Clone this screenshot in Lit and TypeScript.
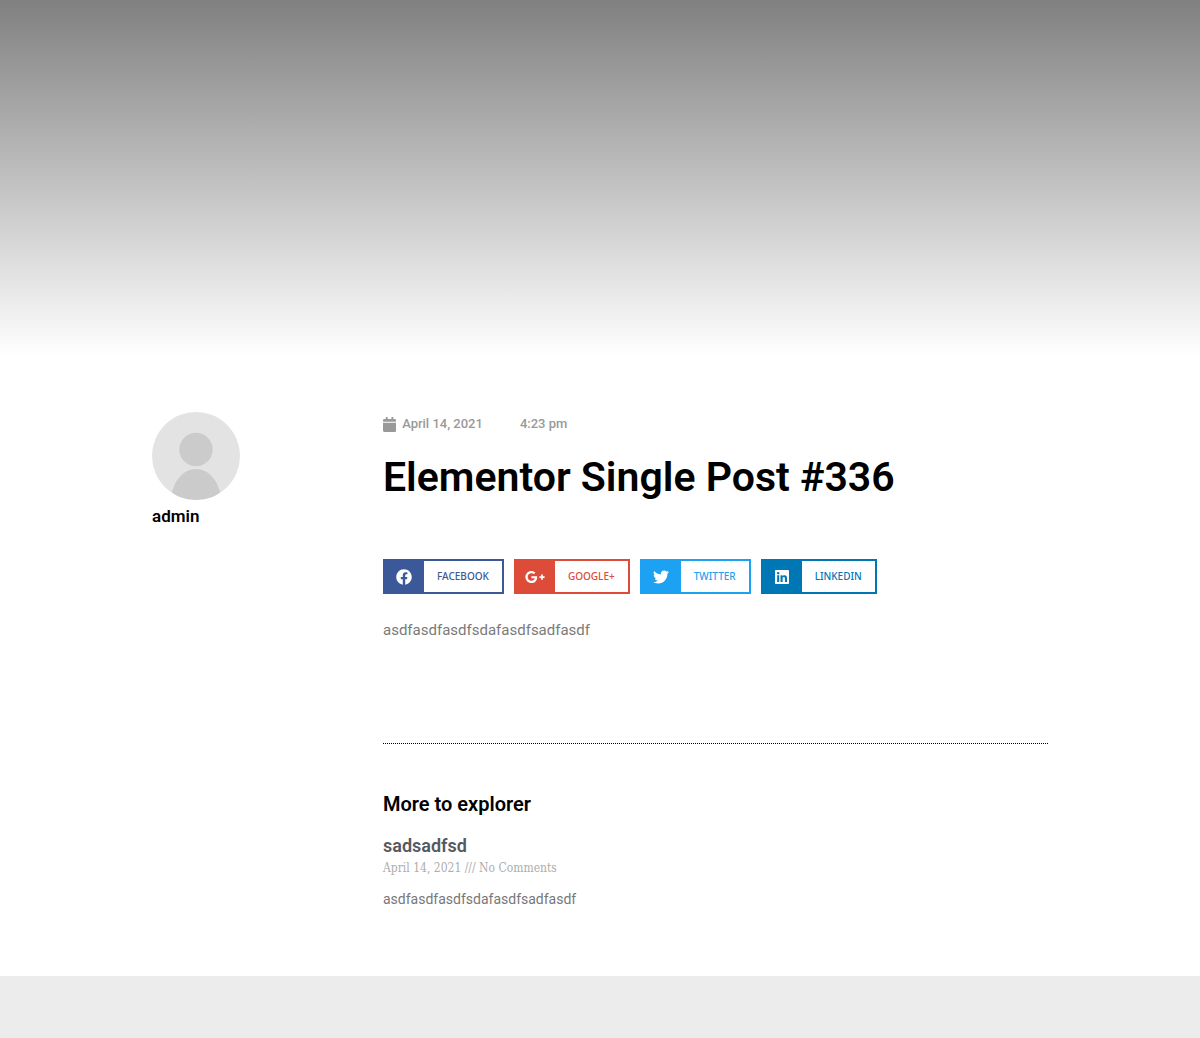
import { LitElement, html, css, svg } from "lit";
import { customElement, property } from "lit/decorators.js";

interface Network {
  name: string;
  kind: string;
  box: string;
  path: string;
}

const NETWORKS: Network[] = [
  {
    name: "Facebook",
    kind: "facebook",
    box: "0 0 512 512",
    path: "M504 256C504 119 393 8 256 8S8 119 8 256c0 123.78 90.69 226.38 209.25 245V327.69h-63V256h63v-54.64c0-62.15 37-96.48 93.67-96.48 27.14 0 55.52 4.84 55.52 4.84v61h-31.28c-30.8 0-40.41 19.12-40.41 38.73V256h68.78l-11 71.69h-57.78V501C413.31 482.38 504 379.78 504 256z",
  },
  {
    name: "Google+",
    kind: "google",
    box: "0 0 640 512",
    path: "M386.061 228.496c1.834 9.692 3.143 19.384 3.143 31.956C389.204 370.205 315.599 448 204.8 448c-106.084 0-192-85.915-192-192s85.916-192 192-192c51.864 0 95.083 18.859 128.611 50.292l-52.126 50.03c-14.145-13.621-39.028-29.599-76.485-29.599-65.484 0-118.92 54.221-118.92 121.277 0 67.056 53.436 121.277 118.92 121.277 75.961 0 104.513-54.745 108.965-82.773H204.8v-66.009h181.261zm185.406 6.437V179.2h-56.001v55.733h-55.733v56.001h55.733v55.733h56.001v-55.733H627.2v-56.001h-55.733z",
  },
  {
    name: "Twitter",
    kind: "twitter",
    box: "0 0 512 512",
    path: "M459.37 151.716c.325 4.548.325 9.097.325 13.645 0 138.72-105.583 298.558-298.558 298.558-59.452 0-114.68-17.219-161.137-47.106 8.447.974 16.568 1.299 25.34 1.299 49.055 0 94.213-16.568 130.274-44.832-46.132-.975-84.792-31.188-98.112-72.772 6.498.974 12.995 1.624 19.818 1.624 9.421 0 18.843-1.3 27.614-3.573-48.081-9.747-84.143-51.98-84.143-102.985v-1.299c13.969 7.797 30.214 12.67 47.431 13.319-28.264-18.843-46.781-51.005-46.781-87.391 0-19.492 5.197-37.36 14.294-52.954 51.655 63.675 129.3 105.258 216.365 109.807-1.624-7.797-2.599-15.918-2.599-24.04 0-57.828 46.782-104.934 104.934-104.934 30.213 0 57.502 12.67 76.67 33.137 23.715-4.548 46.456-13.32 66.599-25.34-7.798 24.366-24.366 44.833-46.132 57.827 21.117-2.273 41.584-8.122 60.426-16.243-14.292 20.791-32.161 39.308-52.628 54.253z",
  },
  {
    name: "LinkedIn",
    kind: "linkedin",
    box: "0 0 448 512",
    path: "M416 32H31.9C14.3 32 0 46.5 0 64.3v383.4C0 465.5 14.3 480 31.9 480H416c17.6 0 32-14.5 32-32.3V64.3c0-17.8-14.4-32.3-32-32.3zM135.4 416H69V202.2h66.5V416zm-33.2-243c-21.3 0-38.5-17.3-38.5-38.5S80.9 96 102.2 96c21.2 0 38.5 17.3 38.5 38.5 0 21.3-17.2 38.5-38.5 38.5zm282.1 243h-66.4V312c0-24.8-.5-56.7-34.5-56.7-34.6 0-39.9 27-39.9 54.9V416h-66.4V202.2h63.7v29.2h.9c8.9-16.8 30.6-34.5 62.9-34.5 67.2 0 79.7 44.3 79.7 101.9V416z",
  },
];

const CALENDAR = svg`<path d="M12 192h424c6.6 0 12 5.4 12 12v260c0 26.5-21.5 48-48 48H48c-26.5 0-48-21.5-48-48V204c0-6.6 5.4-12 12-12zm436-44v-36c0-26.5-21.5-48-48-48h-48V12c0-6.6-5.4-12-12-12h-40c-6.6 0-12 5.4-12 12v52H160V12c0-6.6-5.4-12-12-12h-40c-6.6 0-12 5.4-12 12v52H48C21.5 64 0 85.5 0 112v36c0 6.6 5.4 12 12 12h424c6.6 0 12-5.4 12-12z"/>`;

@customElement("share-button")
class ShareButton extends LitElement {
  @property({ attribute: false }) network!: Network;

  static styles = css`
    :host {
      display: block;
    }
    .button {
      display: flex;
      align-items: stretch;
      height: 35px;
      box-sizing: border-box;
      padding: 0;
      border: 2px solid var(--brand);
      background: #fff;
      color: var(--brand);
      font: 500 10px/15px "Noto Sans", "Open Sans", sans-serif;
      text-transform: uppercase;
      cursor: pointer;
    }
    .facebook { --brand: #3b5998; }
    .google { --brand: #dd4b39; }
    .twitter { --brand: #1da1f2; }
    .linkedin { --brand: #0077b5; }
    .icon {
      display: flex;
      align-items: center;
      justify-content: center;
      width: 39px;
      padding-right: 1px;
      box-sizing: border-box;
      background: var(--brand);
    }
    .icon svg {
      height: 16px;
      fill: #fff;
    }
    .label {
      align-self: center;
      padding: 0 13px;
    }
  `;

  render() {
    const n = this.network;
    return html`<button class="button ${n.kind}" type="button">
      <span class="icon"><svg viewBox=${n.box} aria-hidden="true"><path d=${n.path}></path></svg></span>
      <span class="label">${n.name}</span>
    </button>`;
  }
}

@customElement("app-root")
class AppRoot extends LitElement {
  static styles = css`
    :host {
      display: flex;
      flex-direction: column;
      min-height: 100vh;
      background: #fff;
      color: #000;
      font-family: Roboto, sans-serif;
    }
    .hero {
      height: 356px;
      background: linear-gradient(#808080, #fff);
    }
    .post {
      display: grid;
      grid-template-columns: 231px minmax(0, 1fr);
      width: calc(100% - 48px);
      max-width: 896px;
      margin: 0 auto;
      padding: 56px 0 66px;
    }
    .avatar {
      display: block;
      width: 88px;
      height: 88px;
    }
    .author-name {
      margin: 4px 0 0;
      font-size: 17px;
      line-height: 24px;
      font-weight: 600;
    }
    .meta {
      display: flex;
      align-items: center;
      margin: 0;
      padding: 0;
      list-style: none;
      color: #999;
      font-size: 13px;
      line-height: 24px;
      font-weight: 500;
    }
    .date {
      display: flex;
      align-items: center;
      gap: 6px;
      margin-right: 37px;
    }
    .date svg {
      height: 15px;
      fill: currentColor;
    }
    .title {
      margin: 16px 0 56px;
      font-size: 41px;
      line-height: 51px;
      font-weight: 600;
    }
    .share {
      display: flex;
      flex-wrap: wrap;
      gap: 10px;
    }
    .body {
      margin: 24px 0 101px;
      color: #7a7a7a;
      font-size: 15px;
      line-height: 24px;
    }
    .rule {
      margin: 0;
      border: 0;
      border-top: 1px dotted #000;
    }
    .more {
      margin: 48px 0 20px;
      font-size: 20px;
      line-height: 24px;
      font-weight: 600;
    }
    .entry-title {
      margin: 0;
      font-size: 18px;
      line-height: 20px;
      font-weight: 600;
    }
    .entry-title a {
      color: #54595f;
      text-decoration: none;
    }
    .entry-meta {
      margin: 0 0 8px;
      color: #adadad;
      font: 400 12px/24px "Roboto Slab", "DejaVu Serif Condensed", "Liberation Serif", serif;
    }
    .excerpt {
      margin: 0;
      color: #777;
      font-size: 14px;
      line-height: 22px;
    }
    .footer {
      flex: 1;
      min-height: 62px;
      background: #ececec;
    }
  `;

  render() {
    return html`
      <header class="hero"></header>
      <main class="post">
        <aside>
          <svg class="avatar" viewBox="0 0 88 88" role="img" aria-label="admin">
            <defs><clipPath id="round"><circle cx="44" cy="44" r="44" /></clipPath></defs>
            <g clip-path="url(#round)">
              <rect width="88" height="88" fill="#e3e3e3" />
              <circle cx="44" cy="37.5" r="16.7" fill="#cbcbcb" />
              <path d="M18.5 88C20.5 69 31.5 57 44 57S67.5 69 69.5 88z" fill="#cbcbcb" />
            </g>
          </svg>
          <p class="author-name">admin</p>
        </aside>
        <article>
          <ul class="meta">
            <li class="date"><svg viewBox="0 0 448 512" aria-hidden="true">${CALENDAR}</svg>April 14, 2021</li>
            <li>4:23 pm</li>
          </ul>
          <h1 class="title">Elementor Single Post #336</h1>
          <div class="share">${NETWORKS.map((n) => html`<share-button .network=${n}></share-button>`)}</div>
          <p class="body">asdfasdfasdfsdafasdfsadfasdf</p>
          <hr class="rule" />
          <h2 class="more">More to explorer</h2>
          <h3 class="entry-title"><a href="#">sadsadfsd</a></h3>
          <p class="entry-meta">April 14, 2021 /// No Comments</p>
          <p class="excerpt">asdfasdfasdfsdafasdfsadfasdf</p>
        </article>
      </main>
      <footer class="footer"></footer>
    `;
  }
}
